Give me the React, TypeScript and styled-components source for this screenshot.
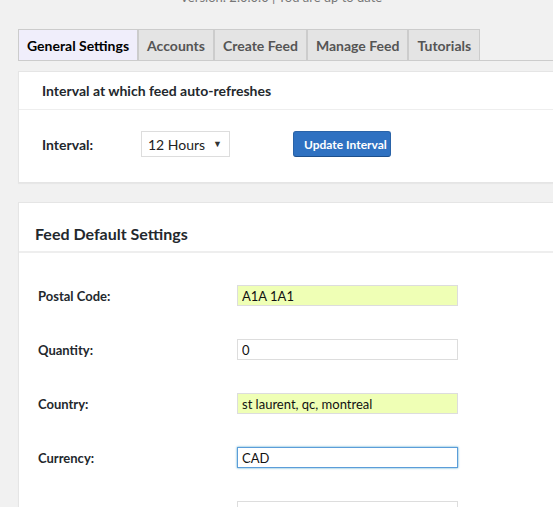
import { useState } from 'react';
import styled, { createGlobalStyle } from 'styled-components';

const GlobalStyle = createGlobalStyle`
  html, body {
    margin: 0;
    padding: 0;
    background: #f1f1f1;
    overflow: hidden;
  }
  body {
    font-family: Lato, "Open Sans", "Liberation Sans", sans-serif;
    color: #23282d;
  }
`;

const Page = styled.div`
  width: 620px;
  padding-left: 18px;
`;

const Header = styled.div`
  height: 29px;
  overflow: hidden;
`;

const HeaderRow = styled.div`
  display: flex;
  align-items: flex-end;
  margin-top: -10px;
  height: 14px;
`;

const Logo = styled.span`
  display: block;
  width: 6px;
  height: 6px;
  margin-left: 22px;
  margin-bottom: 10px;
  border-radius: 50%;
  background: #f7a21b;
`;

const Version = styled.span`
  margin-left: 134px;
  font-size: 13px;
  line-height: 14px;
  color: #777;
`;

const TabBar = styled.div`
  display: flex;
  border-bottom: 1px solid #ccc;
`;

const Tab = styled.button<{ active?: boolean }>`
  height: 31px;
  padding: 0 8px;
  margin: 0;
  border: 1px solid #ccc;
  border-bottom: none;
  background: ${p => (p.active ? '#f0eefb' : '#e4e4e4')};
  color: ${p => (p.active ? '#000' : '#555')};
  font-family: inherit;
  font-size: 14px;
  font-weight: 700;
  cursor: pointer;
`;

const Panel = styled.div`
  background: #fff;
  border: 1px solid #e5e5e5;
  border-right: none;
  box-shadow: 0 1px 1px rgba(0, 0, 0, 0.04);
`;

const IntervalPanel = styled(Panel)`
  margin-top: 10px;
`;

const DefaultsPanel = styled(Panel)`
  margin-top: 19px;
`;

const PanelTitle = styled.div`
  height: 37px;
  display: flex;
  align-items: center;
  padding-left: 23px;
  font-size: 14px;
  font-weight: 700;
  border-bottom: 1px solid #eee;
`;

const IntervalRow = styled.div`
  box-sizing: border-box;
  display: flex;
  align-items: center;
  height: 72px;
  padding: 0 0 4px 23px;
`;

const IntervalLabel = styled.label`
  width: 99px;
  font-size: 14px;
  font-weight: 700;
`;

const SelectWrap = styled.div`
  position: relative;
  width: 89px;
  margin-right: 63px;
`;

const Select = styled.select`
  appearance: none;
  width: 89px;
  height: 26px;
  padding: 0 0 0 6px;
  border: 1px solid #ddd;
  background: #fff;
  font-family: inherit;
  font-size: 14px;
  color: #222;
  outline: none;
`;

const Caret = styled.span`
  position: absolute;
  right: 8px;
  top: 7px;
  font-size: 9px;
  color: #333;
  pointer-events: none;
`;

const PrimaryButton = styled.button`
  width: 98px;
  height: 26px;
  padding: 0 0 0 10px;
  border: 1px solid #2a63a8;
  border-bottom-color: #1d4f8c;
  border-radius: 3px;
  background: #2f71c1;
  color: #fff;
  font-family: inherit;
  font-size: 12px;
  font-weight: 700;
  text-align: left;
  white-space: nowrap;
  cursor: pointer;
`;

const SectionTitle = styled.h2`
  margin: 0;
  height: 50px;
  display: flex;
  align-items: flex-end;
  padding: 0 0 8px 16px;
  box-sizing: border-box;
  font-size: 16px;
  font-weight: 700;
  border-bottom: 2px solid #eee;
`;

const FormGrid = styled.div`
  display: grid;
  grid-template-columns: 199px 221px;
  row-gap: 33px;
  align-items: center;
  padding: 32px 0 20px 19px;
`;

const FieldLabel = styled.label`
  font-size: 13px;
  font-weight: 700;
`;

const TextInput = styled.input<{ filled?: boolean; focused?: boolean }>`
  box-sizing: border-box;
  width: 221px;
  height: 21px;
  padding: 0 4px;
  border: 1px solid ${p => (p.focused ? '#5b9dd9' : '#ddd')};
  box-shadow: ${p => (p.focused ? '0 0 2px rgba(30, 140, 190, 0.8)' : 'none')};
  background: ${p => (p.filled ? '#efffb5' : '#fff')};
  font-family: inherit;
  font-size: 13px;
  color: #111;
  outline: none;
`;

const tabs = ['General Settings', 'Accounts', 'Create Feed', 'Manage Feed', 'Tutorials'];

const fields = [
  { label: 'Postal Code:', value: 'A1A 1A1', filled: true },
  { label: 'Quantity:', value: '0' },
  { label: 'Country:', value: 'st laurent, qc, montreal', filled: true },
  { label: 'Currency:', value: 'CAD', focused: true },
  { label: '', value: '' },
];

export default function App() {
  const [activeTab, setActiveTab] = useState(0);
  const [interval, setInterval] = useState('12');

  return (
    <>
      <GlobalStyle />
      <Page>
        <Header>
          <HeaderRow>
            <Logo />
            <Version>Version: 2.0.0.0 | You are up to date</Version>
          </HeaderRow>
        </Header>

        <TabBar>
          {tabs.map((t, i) => (
            <Tab key={t} active={i === activeTab} onClick={() => setActiveTab(i)}>
              {t}
            </Tab>
          ))}
        </TabBar>

        <IntervalPanel>
          <PanelTitle>Interval at which feed auto-refreshes</PanelTitle>
          <IntervalRow>
            <IntervalLabel>Interval:</IntervalLabel>
            <SelectWrap>
              <Select value={interval} onChange={e => setInterval(e.target.value)}>
                <option value="1">1 Hour</option>
                <option value="6">6 Hours</option>
                <option value="12">12 Hours</option>
                <option value="24">24 Hours</option>
              </Select>
              <Caret>▼</Caret>
            </SelectWrap>
            <PrimaryButton>Update Interval</PrimaryButton>
          </IntervalRow>
        </IntervalPanel>

        <DefaultsPanel>
          <SectionTitle>Feed Default Settings</SectionTitle>
          <FormGrid>
            {fields.map((f, i) => (
              <>
                <FieldLabel key={`l${i}`}>{f.label}</FieldLabel>
                <TextInput
                  key={`i${i}`}
                  defaultValue={f.value}
                  filled={f.filled}
                  focused={f.focused}
                />
              </>
            ))}
          </FormGrid>
        </DefaultsPanel>
      </Page>
    </>
  );
}
